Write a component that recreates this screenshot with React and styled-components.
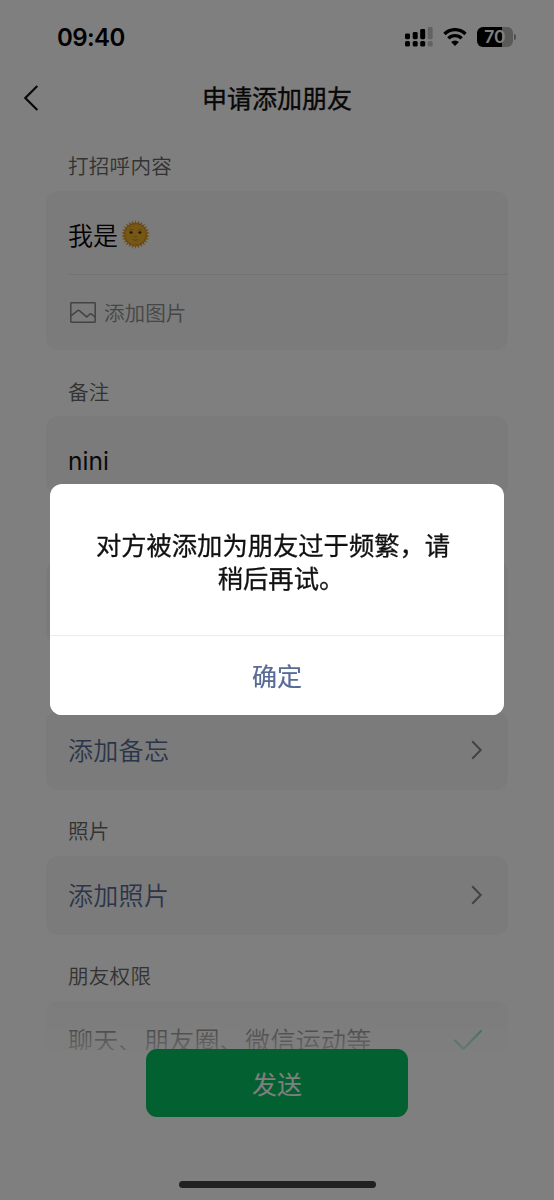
import React, { useState } from 'react';
import styled, { createGlobalStyle } from 'styled-components';

const RAYS = Array.from({ length: 26 }, (_, i) => (i * 360) / 26);

const SunFace = () => (
  <SunSvg width="29" height="29" viewBox="0 0 28 28">
    {RAYS.map((deg) => (
      <path
        key={deg}
        d="M12.6 4 L14 0.1 L15.4 4 Z"
        fill="#e09a1c"
        transform={`rotate(${deg} 14 14)`}
      />
    ))}
    <circle cx="14" cy="14" r="11" fill="#d9931c" />
    <circle cx="14" cy="14" r="9.9" fill="#edb02d" />
    <path
      d="M7.8 9.8q2-1.5 4.2 0M16 9.8q2.2-1.5 4.2 0"
      stroke="#c07f16"
      strokeWidth="0.8"
      fill="none"
    />
    <ellipse cx="9.7" cy="12" rx="1.5" ry="1.2" fill="#4a2c06" />
    <ellipse cx="18.3" cy="12" rx="1.5" ry="1.2" fill="#4a2c06" />
    <path
      d="M12.8 16q1.2.9 2.4 0M11.4 18.9q2.6 1.5 5.2 0"
      stroke="#b8740f"
      strokeWidth="0.8"
      fill="none"
    />
  </SunSvg>
);

const StatusIcons = () => (
  <StatusGroup>
    <svg width="28" height="20" viewBox="0 0 28 20">
      <rect x="0" y="6.5" width="5" height="5.7" rx="1.4" />
      <rect x="7.7" y="5" width="5" height="7.2" rx="1.4" />
      <rect x="15.2" y="2" width="5" height="10.2" rx="1.4" />
      <rect x="0" y="14" width="5" height="5.5" rx="1.6" />
      <rect x="7.7" y="14" width="5" height="5.5" rx="1.6" />
      <rect x="15.2" y="14" width="5" height="5.5" rx="1.6" />
      <g fill="#c4c4c4">
        <rect x="22.7" y="0" width="5" height="12.2" rx="1.4" />
        <rect x="22.7" y="14" width="5" height="5.5" rx="1.6" />
      </g>
    </svg>
    <svg width="24" height="18" viewBox="0 0 24 18">
      <g fill="none" stroke="#000" strokeWidth="3.3">
        <path d="M1.5 6a14.8 14.8 0 0 1 21 0" />
        <path d="M5.4 10.4a9.2 9.2 0 0 1 13.2 0" />
      </g>
      <path d="M12 18 8.1 14.1a5.5 5.5 0 0 1 7.8 0z" />
    </svg>
    <Battery>
      <BatteryBody>70</BatteryBody>
      <BatteryTip />
    </Battery>
  </StatusGroup>
);

const Arrow = () => (
  <ArrowSvg width="12" height="20" viewBox="0 0 12 20" fill="none">
    <path d="M1.2 1.3 9.7 10l-8.5 8.7" stroke="#858585" strokeWidth="2" />
  </ArrowSvg>
);

const App = () => {
  const [showDialog, setShowDialog] = useState(true);

  return (
    <Phone>
      <GlobalStyle />
      <StatusBar>
        <Clock>09:40</Clock>
        <StatusIcons />
      </StatusBar>
      <NavBar>
        <BackButton aria-label="返回">
          <svg width="16" height="28" viewBox="0 0 16 28" fill="none">
            <path d="M14.3 2 2.3 14l12 12" stroke="#111" strokeWidth="2.2" />
          </svg>
        </BackButton>
        <Title>申请添加朋友</Title>
      </NavBar>

      <Form>
        <Label>打招呼内容</Label>
        <Card>
          <GreetingRow>
            我是
            <SunFace />
          </GreetingRow>
          <ImageRow>
            <svg width="26" height="21" viewBox="0 0 26 21" fill="none">
              <g stroke="#868686" strokeWidth="1.5">
                <rect x="0.8" y="0.8" width="24.4" height="19.4" rx="0.6" />
                <path d="m1 13.8 6.3-5q1.2-.9 2.3 0l7.2 6.1 3-2.7q1-.8 2 0l3.3 3" />
              </g>
            </svg>
            <ImageText>添加图片</ImageText>
          </ImageRow>
        </Card>

        <Label $low>备注</Label>
        <Card>
          <Row>
            <Latin>nini</Latin>
          </Row>
        </Card>

        <Label />
        <Card>
          <Row $tall />
        </Card>

        <Label />
        <Card>
          <Row $link>
            <RowText>添加备忘</RowText>
            <Arrow />
          </Row>
        </Card>

        <Label>照片</Label>
        <Card>
          <Row $link>
            <RowText>添加照片</RowText>
            <Arrow />
          </Row>
        </Card>

        <Label>朋友权限</Label>
        <Card>
          <Row>
            <RowText>聊天、朋友圈、微信运动等</RowText>
            <CheckSvg width="30" height="22" viewBox="0 0 30 22" fill="none">
              <path d="m1.5 11 9 9L28.5 1.5" stroke="#07c160" strokeWidth="2.2" />
            </CheckSvg>
          </Row>
        </Card>
      </Form>

      <Footer>
        <SendButton>发送</SendButton>
        <HomeIndicator />
      </Footer>

      {showDialog && (
        <Mask>
          <Dialog>
            <Message>
              <MessageLine>对方被添加为朋友过于频繁，请</MessageLine>
              <MessageLine $last>稍后再试。</MessageLine>
            </Message>
            <ConfirmButton onClick={() => setShowDialog(false)}>
              确定
            </ConfirmButton>
          </Dialog>
        </Mask>
      )}
    </Phone>
  );
};

export default App;

const GlobalStyle = createGlobalStyle`
  * {
    box-sizing: border-box;
  }

  body {
    margin: 0;
    background: #fff;
  }

  button {
    font-family: inherit;
    border: none;
    padding: 0;
    cursor: pointer;
  }
`;

const Phone = styled.div`
  display: flex;
  flex-direction: column;
  width: 554px;
  height: 1200px;
  overflow: hidden;
  background: #fff;
  color: #111;
  font-family: 'Noto Sans CJK SC', sans-serif;
  font-weight: 350;
`;

const StatusBar = styled.div`
  display: flex;
  justify-content: space-between;
  align-items: center;
  height: 74px;
  padding: 0 38px 0 57px;
`;

const Clock = styled.div`
  padding-top: 1px;
  color: #000;
  font-family: Inter, sans-serif;
  font-size: 24px;
  font-weight: 600;
  letter-spacing: -0.6px;
  line-height: 30px;
`;

const StatusGroup = styled.div`
  display: flex;
  align-items: center;
  gap: 10px;
`;

const Battery = styled.div`
  display: flex;
  align-items: center;
  gap: 1px;
`;

const BatteryBody = styled.div`
  width: 36px;
  height: 20px;
  border-radius: 6px;
  background: linear-gradient(90deg, #000 70%, #b4b4b4 70%);
  color: #fff;
  text-align: center;
  font-family: Inter, sans-serif;
  font-size: 17.5px;
  font-weight: 600;
  line-height: 20px;
`;

const BatteryTip = styled.div`
  width: 2px;
  height: 6px;
  border-radius: 0 2px 2px 0;
  background: #a0a0a0;
`;

const NavBar = styled.div`
  display: flex;
  align-items: center;
  height: 51px;
  padding: 0 23px 4px;
`;

const BackButton = styled.button`
  display: flex;
  width: 16px;
  height: 28px;
  background: none;
`;

const Title = styled.div`
  flex: 1;
  margin-right: 16px;
  padding-bottom: 2px;
  text-align: center;
  font-size: 25px;
  font-weight: 400;
  line-height: 36px;
  -webkit-text-stroke: 0.4px #111;
`;

const Form = styled.div`
  position: relative;
  flex: none;
  height: 925px;
  padding: 0 46px;
  overflow: hidden;

  &::after {
    content: '';
    position: absolute;
    left: 0;
    right: 0;
    bottom: 0;
    height: 50px;
    background: linear-gradient(
      rgba(255, 255, 255, 0.25),
      rgba(255, 255, 255, 0.8)
    );
  }
`;

const Label = styled.div`
  height: 66px;
  padding: ${(props) => (props.$low ? '26px' : '25px')} 22px 0;
  color: #666;
  font-size: 20.6px;
  letter-spacing: 0.2px;
  line-height: 30px;
`;

const Card = styled.div`
  border-radius: 12px;
  background: #f7f7f7;
`;

const Row = styled.div`
  display: flex;
  justify-content: space-between;
  align-items: center;
  height: ${(props) => (props.$tall ? '84px' : '79px')};
  padding: 0 25px 0 22px;
  color: ${(props) => (props.$link ? '#576b95' : '#111')};
  font-size: 25px;
  letter-spacing: 0.3px;
`;

const RowText = styled.span`
  padding-bottom: 3px;
  white-space: nowrap;
`;

const Latin = styled.span`
  padding-top: 11px;
  font-family: Inter, sans-serif;
  font-size: 24.5px;
  font-weight: 400;
  letter-spacing: 0;
`;

const GreetingRow = styled.div`
  display: flex;
  align-items: center;
  height: 84px;
  margin-left: 22px;
  padding-top: 2px;
  border-bottom: 1px solid #e6e6e6;
  color: #000;
  font-size: 25px;
`;

const SunSvg = styled.svg`
  margin: 2px 0 0 3px;
`;

const ImageRow = styled.div`
  display: flex;
  align-items: center;
  gap: 8px;
  height: 75px;
  padding-left: 24px;
  color: #8c8c8c;
  font-size: 20.6px;
`;

const ImageText = styled.span`
  padding-bottom: 1px;
`;

const ArrowSvg = styled.svg`
  margin-bottom: 2px;
`;

const CheckSvg = styled.svg`
  flex: none;
  margin-bottom: 2px;
`;

const Footer = styled.div`
  display: flex;
  flex: 1;
  flex-direction: column;
  justify-content: space-between;
  align-items: center;
  padding-bottom: 12px;
`;

const SendButton = styled.button`
  position: relative;
  width: 262px;
  height: 68px;
  margin-top: -1px;
  padding-bottom: 1px;
  border-radius: 11px;
  background: #07c160;
  color: #fff;
  font-size: 25px;
`;

const HomeIndicator = styled.div`
  width: 197px;
  height: 7px;
  border-radius: 4px;
  background: #424242;
`;

const Mask = styled.div`
  position: fixed;
  top: 0;
  left: 0;
  right: 0;
  bottom: 0;
  display: flex;
  justify-content: center;
  align-items: center;
  padding-bottom: 2px;
  background: rgba(0, 0, 0, 0.5);
  z-index: 100;
`;

const Dialog = styled.div`
  width: 454px;
  height: 231px;
  border-radius: 12px;
  background: #fff;
  overflow: hidden;
`;

const Message = styled.div`
  height: 152px;
  padding: 44px 38px 0;
  border-bottom: 1px solid #ededed;
  font-size: 25.3px;
  font-weight: 400;
  line-height: 33px;
  -webkit-text-stroke: 0.3px #111;
`;

const MessageLine = styled.div`
  padding: ${(props) => (props.$last ? '0 0 0 8px' : '0 8px 0 0')};
  text-align: center;
  white-space: nowrap;
`;

const ConfirmButton = styled.button`
  display: block;
  width: 100%;
  height: 79px;
  background: #fff;
  color: #576b95;
  font-size: 25px;
  font-weight: 400;
  -webkit-text-stroke: 0.2px #576b95;
`;
